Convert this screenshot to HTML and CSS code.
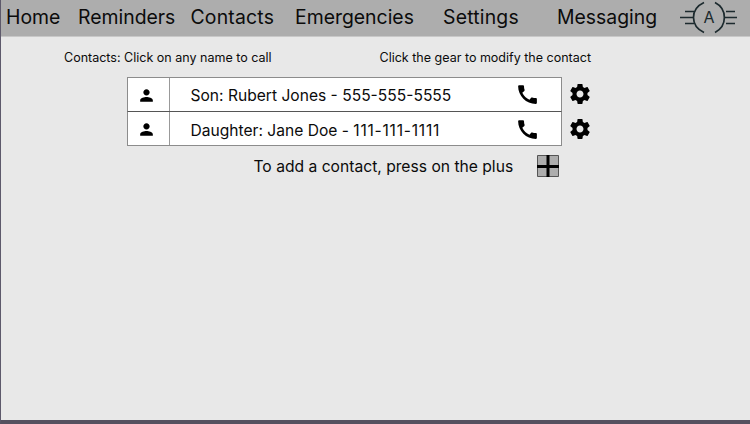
FILE: index.html
```html
<!DOCTYPE html>
<html lang="en">
<head>
<meta charset="utf-8">
<title>Contacts</title>
<link rel="stylesheet" href="styles.css">
</head>
<body>
<svg class="defs" aria-hidden="true">
  <symbol id="person" viewBox="0 0 24 24"><path d="M12 12c2.21 0 4-1.79 4-4s-1.79-4-4-4-4 1.79-4 4 1.79 4 4 4zm0 2c-2.67 0-8 1.34-8 4v2h16v-2c0-2.66-5.33-4-8-4z"/></symbol>
  <symbol id="call" viewBox="0 0 24 24"><path d="M20.01 15.38c-1.23 0-2.42-.2-3.53-.56-.35-.12-.74-.03-1.01.24l-1.57 1.97c-2.83-1.35-5.48-3.9-6.89-6.83l1.95-1.66c.27-.28.35-.67.24-1.02-.37-1.11-.56-2.3-.56-3.53 0-.54-.45-.99-.99-.99H4.19C3.65 3 3 3.24 3 3.99 3 13.28 10.73 21 20.01 21c.71 0 .99-.63.99-1.18v-3.45c0-.54-.45-.99-.99-.99z"/></symbol>
  <symbol id="gear" viewBox="0 0 24 24"><path d="M19.43 12.98c.04-.32.07-.64.07-.98s-.03-.66-.07-.98l2.11-1.65c.19-.15.24-.42.12-.64l-2-3.46c-.12-.22-.39-.3-.61-.22l-2.49 1c-.52-.4-1.08-.73-1.69-.98l-.38-2.65C14.46 2.18 14.25 2 14 2h-4c-.25 0-.46.18-.49.42l-.38 2.65c-.61.25-1.17.59-1.69.98l-2.49-1c-.23-.09-.49 0-.61.22l-2 3.46c-.13.22-.07.49.12.64l2.11 1.65c-.04.32-.07.65-.07.98s.03.66.07.98l-2.11 1.65c-.19.15-.24.42-.12.64l2 3.46c.12.22.39.3.61.22l2.49-1c.52.4 1.08.73 1.69.98l.38 2.65c.03.24.24.42.49.42h4c.25 0 .46-.18.49-.42l.38-2.65c.61-.25 1.17-.59 1.69-.98l2.49 1c.23.09.49 0 .61-.22l2-3.46c.12-.22.07-.49-.12-.64l-2.11-1.65zM12 15.5c-1.93 0-3.5-1.57-3.5-3.5s1.57-3.5 3.5-3.5 3.5 1.57 3.5 3.5-1.57 3.5-3.5 3.5z"/></symbol>
</svg>
<div class="app">
  <nav class="nav">
    <a>Home</a><a>Reminders</a><a class="wide">Contacts</a><a>Emergencies</a><a class="wide">Settings</a><a>Messaging</a>
    <div class="logo">
      <svg class="logo-mark" viewBox="0 0 58 34"><g fill="none" stroke="#1c2a2e" stroke-width="1.3"><path d="M5 11.500h9M0 17.500h13M5 23.500h9M46 11.500h9M44 17.500h13M46 23.500h9"/><path stroke-width="1.700" d="M24 2.500C10 9 10 26 24 32.500M35 2.500C47.500 9 47.500 26 35 32.500"/></g></svg>
      <span class="logo-letter">A</span>
    </div>
  </nav>
  <div class="hints"><p>Contacts: Click on any name to call</p><p>Click the gear to modify the contact</p></div>
  <ul class="contacts">
    <li class="contact">
      <div class="card"><span class="avatar"><svg class="i-person"><use href="#person"/></svg></span><span class="name">Son: Rubert Jones - 555-555-5555</span><svg class="i-call"><use href="#call"/></svg></div>
      <svg class="i-gear"><use href="#gear"/></svg>
    </li>
    <li class="contact">
      <div class="card"><span class="avatar"><svg class="i-person"><use href="#person"/></svg></span><span class="name">Daughter: Jane Doe - <span class="ones">111-111-1111</span></span><svg class="i-call"><use href="#call"/></svg></div>
      <svg class="i-gear"><use href="#gear"/></svg>
    </li>
  </ul>
  <div class="add"><span>To add a contact, press on the plus</span>
    <svg class="plus" viewBox="0 0 22 22"><path fill="#adadad" stroke="#555" d="M.5.5h21v21H.5z"/><path stroke="#000" stroke-width="3" d="M11 0v22M0 11.500h22"/></svg>
  </div>
</div>
</body>
</html>
```

FILE: styles.css
```css
* { box-sizing: border-box; margin: 0; padding: 0; }
body { width: 750px; height: 424px; overflow: hidden; background: #e8e8e8; font-family: Inter, sans-serif; color: #0b0b0b; }
svg { display: block; flex: none; }
.defs { position: absolute; width: 0; height: 0; }
.app { height: 424px; border-left: 1px solid #5d596b; border-bottom: 4px solid #55505f; }
.nav { height: 37px; display: grid; grid-template-columns: 72px 112.5px 104.5px 148px 114px 122.5px 60px; padding-left: 5px; background: #adadad; border-bottom: 1px solid #c8c8c8; font-size: 19.4px; line-height: 34px; white-space: nowrap; }
.wide { letter-spacing: .2px; }
.logo { display: grid; width: 58px; }
.logo > * { grid-area: 1 / 1; }
.logo-mark { width: 58px; height: 34px; }
.logo-letter { padding-left: 1px; text-align: center; font-size: 16px; line-height: 35px; color: #1c2a2e; }
.hints { display: grid; grid-template-columns: 315.5px 1fr; padding: 12px 0 0 63px; font-size: 12.53px; line-height: 18px; }
.contacts { list-style: none; margin: 10px 0 0 126px; }
.contact { display: flex; align-items: center; gap: 6px; height: 34px; }
.card { display: flex; align-items: center; width: 435px; height: 35px; border: 1px solid #8c8c8c; background: #fff; }
.contact + .contact .card { border-top-color: #555; }
.avatar { display: flex; align-items: center; justify-content: center; width: 42px; height: 100%; padding: 2px 4px 0 0; border-right: 1px solid #999; }
.i-person { width: 19px; height: 19px; }
.name { width: 324px; padding: 2px 0 0 20.5px; font-size: 15.6px; white-space: nowrap; }
.contact + .contact .name { padding-top: 4px; }
.ones { letter-spacing: .75px; }
.i-call { width: 25px; height: 25px; margin-left: 20.5px; }
.i-gear { width: 24px; height: 24px; }
.contact + .contact .i-call, .contact + .contact .i-gear { margin-top: 2px; }
.add { display: flex; align-items: center; justify-content: space-between; width: 305px; margin: 10px 0 0 252.5px; font-size: 15.65px; }
.plus { width: 22px; height: 22px; }
```
